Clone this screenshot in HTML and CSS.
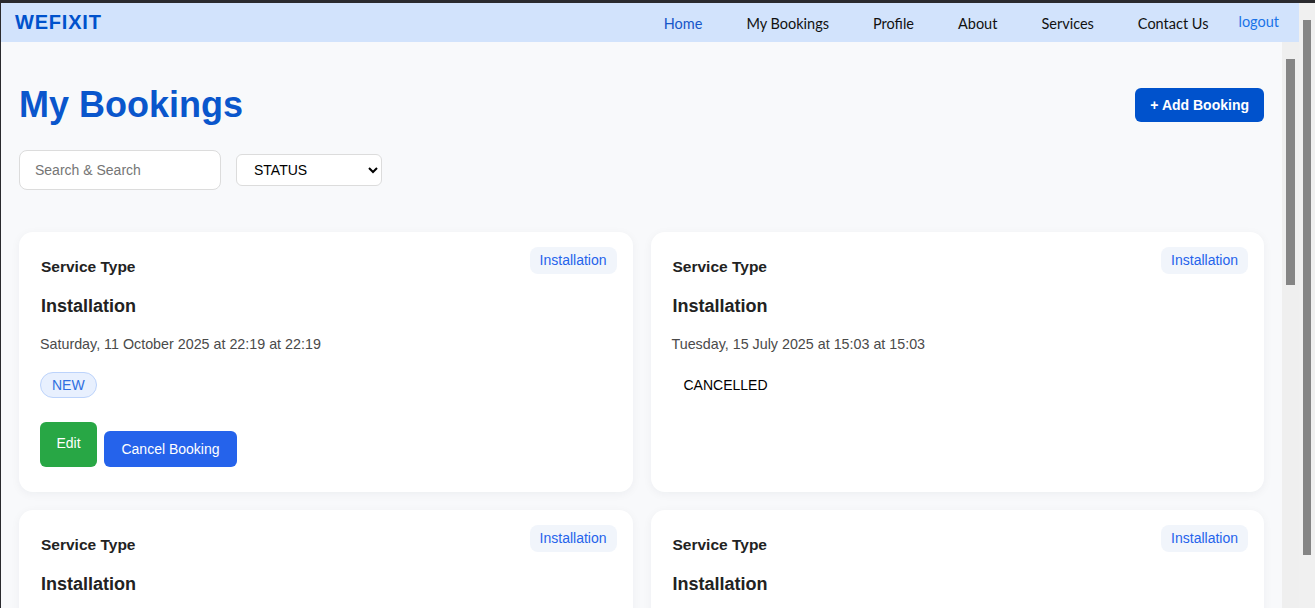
FILE: index.html
```html
<!DOCTYPE html>
<html lang="en">
<head>
<meta charset="utf-8">
<title>WEFIXIT - My Bookings</title>
<link rel="stylesheet" href="styles.css">
</head>
<body>
<div class="frame">
  <div class="app">
    <nav class="nav">
      <a class="brand" href="#">WEFIXIT</a>
      <div class="links">
        <a class="link active" href="#">Home</a>
        <a class="link" href="#">My Bookings</a>
        <a class="link" href="#">Profile</a>
        <a class="link" href="#">About</a>
        <a class="link" href="#">Services</a>
        <a class="link" href="#">Contact Us</a>
      </div>
      <a class="logout" href="#">logout</a>
    </nav>
    <div class="body-row">
      <main class="main">
        <div class="page-head">
          <h1 class="page-title">My Bookings</h1>
          <button class="add-btn">+ Add Booking</button>
        </div>
        <div class="filters">
          <input class="search" type="text" placeholder="Search &amp; Search">
          <select class="status-select">
            <option>STATUS</option>
            <option>NEW</option>
            <option>CANCELLED</option>
          </select>
        </div>
        <div class="grid">
          <div class="card">
            <div class="card-head">
              <h3 class="card-label">Service Type</h3>
              <span class="type-badge">Installation</span>
            </div>
            <h2 class="card-title">Installation</h2>
            <p class="card-date">Saturday, 11 October 2025 at 22:19 at 22:19</p>
            <div class="status-row"><span class="status status-new">NEW</span></div>
            <div class="actions">
              <button class="btn btn-edit">Edit</button>
              <button class="btn btn-cancel">Cancel Booking</button>
            </div>
          </div>
          <div class="card">
            <div class="card-head">
              <h3 class="card-label">Service Type</h3>
              <span class="type-badge">Installation</span>
            </div>
            <h2 class="card-title">Installation</h2>
            <p class="card-date">Tuesday, 15 July 2025 at 15:03 at 15:03</p>
            <div class="status-row"><span class="status">CANCELLED</span></div>
          </div>
          <div class="card">
            <div class="card-head">
              <h3 class="card-label">Service Type</h3>
              <span class="type-badge">Installation</span>
            </div>
            <h2 class="card-title">Installation</h2>
            <p class="card-date">Monday, 14 July 2025 at 10:30 at 10:30</p>
            <div class="status-row"><span class="status">CANCELLED</span></div>
          </div>
          <div class="card">
            <div class="card-head">
              <h3 class="card-label">Service Type</h3>
              <span class="type-badge">Installation</span>
            </div>
            <h2 class="card-title">Installation</h2>
            <p class="card-date">Sunday, 13 July 2025 at 09:15 at 09:15</p>
            <div class="status-row"><span class="status">CANCELLED</span></div>
          </div>
        </div>
      </main>
      <div class="inner-scroll"><div class="inner-thumb"></div></div>
    </div>
  </div>
  <div class="outer-scroll"><div class="outer-thumb"></div></div>
</div>
</body>
</html>
```

FILE: styles.css
```css
* { box-sizing: border-box; }

html, body {
  margin: 0;
  height: 100%;
  overflow: hidden;
}

body {
  background: #2a2a2e;
  font-family: "Liberation Sans", Arial, sans-serif;
  color: #222;
}

.frame {
  display: flex;
  height: calc(100vh - 3px);
  margin: 3px 0 0 1px;
  background: #f0f0f0;
}

.app {
  flex: 1;
  display: flex;
  flex-direction: column;
  min-width: 0;
}

/* NAV */
.nav {
  display: flex;
  align-items: center;
  height: 39px;
  flex-shrink: 0;
  padding: 0 20px 0 14px;
  background: #d2e3fc;
}

.brand {
  flex: 1;
  font-size: 20px;
  font-weight: 700;
  letter-spacing: 0.8px;
  color: #0052cc;
  text-decoration: none;
}

.links {
  display: flex;
  gap: 44px;
  padding-top: 1px;
}

.link {
  font-family: Lato, "Liberation Sans", sans-serif;
  font-size: 14.5px;
  color: #111;
  text-decoration: none;
}

.link.active { color: #1556c9; }

.logout {
  margin-left: 30px;
  padding-bottom: 2px;
  font-family: Lato, "Liberation Sans", sans-serif;
  font-size: 14.5px;
  color: #1a73e8;
  text-decoration: none;
}

/* BODY */
.body-row {
  flex: 1;
  display: flex;
  min-height: 0;
}

.main {
  flex: 1;
  min-width: 0;
  overflow: hidden;
  background: #f8f9fb;
  padding: 42px 18px 0 18px;
}

.inner-scroll {
  width: 17px;
  flex-shrink: 0;
  background: #efefef;
  padding: 17px 0 0 4px;
}

.inner-thumb {
  width: 9px;
  height: 226px;
  background: #858585;
}

.outer-scroll {
  width: 16px;
  flex-shrink: 0;
  background: #f0f0f0;
  padding: 17px 0 0 4px;
}

.outer-thumb {
  width: 8px;
  height: 535px;
  background: #858585;
}

.page-head {
  display: flex;
  align-items: center;
  justify-content: space-between;
}

.page-title {
  margin: 0;
  font-size: 36px;
  line-height: 42px;
  font-weight: 700;
  color: #0a56cc;
}

.add-btn {
  padding: 8px 15px;
  border: none;
  border-radius: 6px;
  background: #0052cc;
  color: #fff;
  font-family: "Liberation Sans", Arial, sans-serif;
  font-size: 14px;
  line-height: 18px;
  font-weight: 700;
}

.filters {
  display: flex;
  align-items: center;
  gap: 15px;
  margin-top: 24px;
}

.search {
  width: 202px;
  height: 40px;
  padding: 0 15px;
  border: 1px solid #dcdcdc;
  border-radius: 8px;
  background: #fff;
  font-family: "Liberation Sans", Arial, sans-serif;
  font-size: 14px;
  color: #222;
}

.search::placeholder { color: #757575; }

.status-select {
  width: 146px;
  height: 32px;
  padding: 0 8px 0 13px;
  border: 1px solid #dcdcdc;
  border-radius: 6px;
  background: #fff;
  font-family: "Liberation Sans", Arial, sans-serif;
  font-size: 14px;
  color: #000;
}

.grid {
  display: grid;
  grid-template-columns: 1fr 1fr;
  gap: 18px;
  margin-top: 42px;
}

.card {
  background: #fff;
  border-radius: 14px;
  padding: 15px 16px 25px 22px;
  box-shadow: 0 2px 10px rgba(20, 30, 60, 0.05);
}

.card-head {
  display: flex;
  justify-content: space-between;
  align-items: flex-start;
}

.card-label {
  margin: 11px 0 0 0;
  font-size: 15.5px;
  line-height: 18px;
  font-weight: 700;
  color: #222;
}

.type-badge {
  padding: 5px 10px;
  border-radius: 8px;
  background: #f1f5fb;
  color: #2563eb;
  font-size: 14px;
  line-height: 17px;
}

.card-title {
  margin: 20px 0 0 0;
  font-size: 18px;
  line-height: 21px;
  font-weight: 700;
  color: #222;
}

.card-date {
  margin: 19px 0 0 -1px;
  font-size: 14.3px;
  line-height: 16px;
  color: #4a4a4a;
}

.status-row {
  margin-top: 20px;
  margin-left: -1px;
  display: flex;
}

.status {
  padding: 4px 11px;
  border: 1px solid transparent;
  border-radius: 13px;
  font-size: 14px;
  line-height: 16px;
  color: #000;
}

.status-new {
  background: #e8f0fe;
  border-color: #bcd3fb;
  color: #2f6fe0;
}

.actions {
  display: flex;
  align-items: flex-end;
  gap: 7px;
  margin-top: 24px;
  margin-left: -1px;
}

.btn {
  border: none;
  border-radius: 6px;
  color: #fff;
  font-family: "Liberation Sans", Arial, sans-serif;
  font-size: 14px;
  line-height: 18px;
}

.btn-edit {
  width: 57px;
  height: 45px;
  padding: 0 0 3px;
  background: #28a745;
}

.btn-cancel {
  width: 133px;
  height: 36px;
  padding: 0;
  background: #2563eb;
}
```
